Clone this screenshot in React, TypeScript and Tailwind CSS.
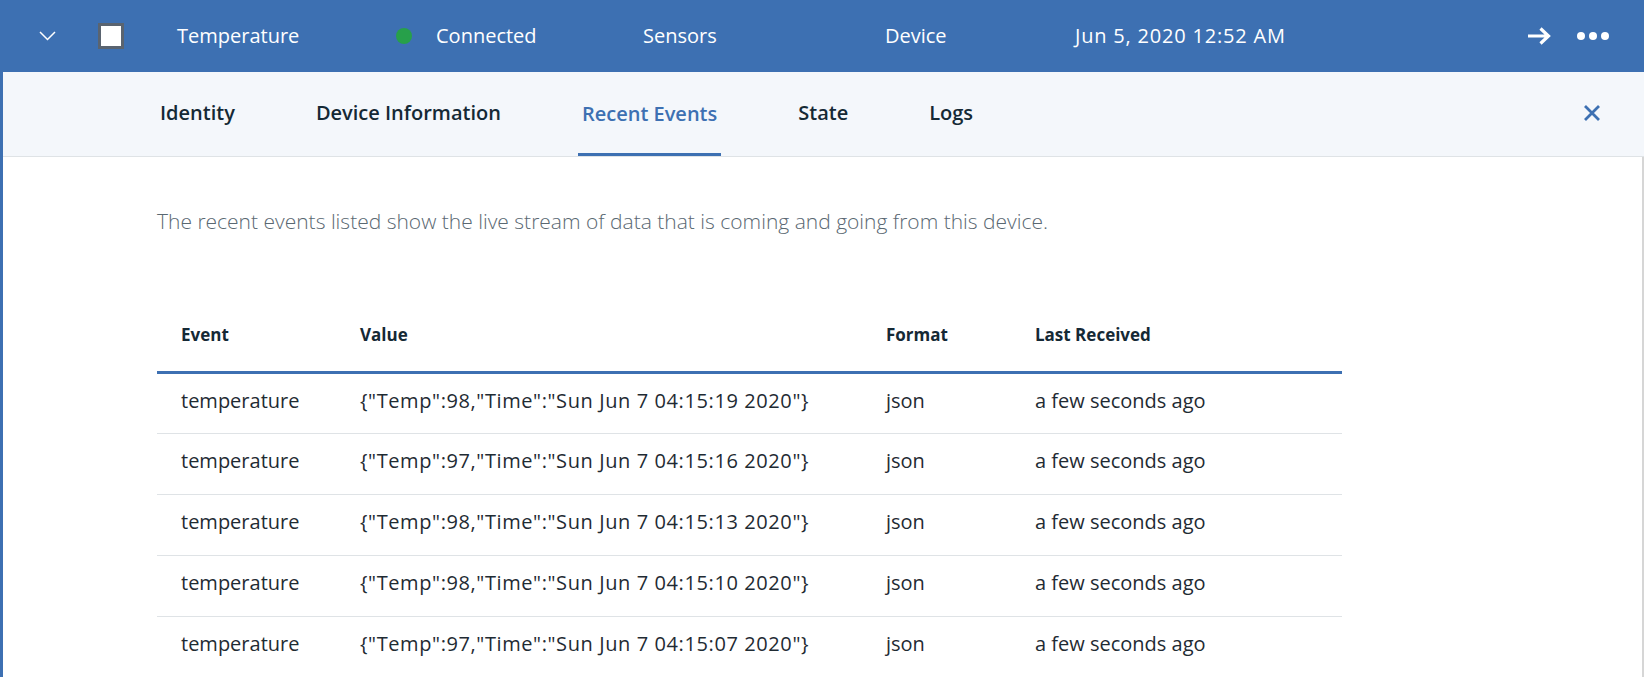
import React from "react";

const rows = [
  { event: "temperature", value: '{"Temp":98,"Time":"Sun Jun 7 04:15:19 2020"}', format: "json", last: "a few seconds ago" },
  { event: "temperature", value: '{"Temp":97,"Time":"Sun Jun 7 04:15:16 2020"}', format: "json", last: "a few seconds ago" },
  { event: "temperature", value: '{"Temp":98,"Time":"Sun Jun 7 04:15:13 2020"}', format: "json", last: "a few seconds ago" },
  { event: "temperature", value: '{"Temp":98,"Time":"Sun Jun 7 04:15:10 2020"}', format: "json", last: "a few seconds ago" },
  { event: "temperature", value: '{"Temp":97,"Time":"Sun Jun 7 04:15:07 2020"}', format: "json", last: "a few seconds ago" },
];

const tabs = ["Identity", "Device Information", "Recent Events", "State", "Logs"];

const font = "font-['Open_Sans',_'Liberation_Sans',_sans-serif]";

export default function App() {
  return (
    <div className={`w-[1644px] bg-white ${font}`}>
      {/* device row */}
      <div className="flex h-[72px] items-center bg-[#3d70b2] text-[20px] text-white">
        <div className="flex w-[98px] justify-start pl-[39px]">
          <svg width="17" height="10" viewBox="0 0 17 10" fill="none">
            <path d="M1 1L8.5 8.5L16 1" stroke="white" strokeWidth="1.5" />
          </svg>
        </div>
        <div className="w-[79px]">
          <div className="h-[26px] w-[26px] border-[3px] border-[#5a6470] bg-white" />
        </div>
        <div className="w-[219px]">Temperature</div>
        <div className="flex w-[247px] items-center">
          <span className="h-4 w-4 rounded-full bg-[#27a04a]" />
          <span className="ml-6">Connected</span>
        </div>
        <div className="w-[242px]">Sensors</div>
        <div className="w-[190px]">Device</div>
        <div className="flex-1 tracking-[0.8px]">Jun 5, 2020 12:52 AM</div>
        <div className="flex items-center gap-[26px] pr-[35px]">
          <svg width="24" height="18" viewBox="0 0 24 18" fill="none">
            <path d="M1 9H21M13.5 1.5L21.5 9L13.5 16.5" stroke="white" strokeWidth="3.2" />
          </svg>
          <svg width="32" height="8" viewBox="0 0 32 8" fill="white">
            <circle cx="4" cy="4" r="4" />
            <circle cx="16" cy="4" r="4" />
            <circle cx="28" cy="4" r="4" />
          </svg>
        </div>
      </div>

      <div className="border-l-[3px] border-[#3d70b2]">
        {/* tabs */}
        <div className="flex h-[85px] items-stretch border-b border-[#dfe3e6] bg-[#f4f7fb] pl-[153px] pr-[43px]">
          <div className="flex gap-[73px]">
            {tabs.map((t) => (
              <div
                key={t}
                className={`flex items-center px-1 text-[20px] font-semibold ${
                  t === "Recent Events"
                    ? "border-b-[3px] border-[#3d70b2] pt-[3px] text-[#3d70b2]"
                    : "pb-[3px] text-[#152935]"
                }`}
              >
                {t}
              </div>
            ))}
          </div>
          <div className="ml-auto flex items-center pb-[2px]">
            <svg width="18" height="18" viewBox="0 0 18 18" fill="none">
              <path d="M2 2L16 16M16 2L2 16" stroke="#3d70b2" strokeWidth="2.8" />
            </svg>
          </div>
        </div>

        {/* content */}
        <div className="border-r-2 border-[#d6d6d6] pl-[154px] pt-[50px]">
          <p className="text-[21px] font-light leading-[28px] text-[#5a6872]">
            The recent events listed show the live stream of data that is coming and going from this device.
          </p>

          <table className="mt-[64px] w-[1185px] table-fixed border-collapse text-left">
            <colgroup>
              <col className="w-[179px]" />
              <col className="w-[526px]" />
              <col className="w-[149px]" />
              <col className="w-[331px]" />
            </colgroup>
            <thead>
              <tr className="h-[73px] border-b-[3px] border-[#3d70b2]">
                {["Event", "Value", "Format", "Last Received"].map((h) => (
                  <th key={h} className="px-6 text-[17px] font-bold text-[#152935]">
                    {h}
                  </th>
                ))}
              </tr>
            </thead>
            <tbody>
              {rows.map((r, i) => (
                <tr key={i} className="h-[61px] border-b border-[#dfe3e6] text-[20px] text-[#1f2b33]">
                  <td className="px-6 pb-[5px]">{r.event}</td>
                  <td className="whitespace-nowrap px-6 pb-[5px] tracking-[0.6px]">{r.value}</td>
                  <td className="px-6 pb-[5px]">{r.format}</td>
                  <td className="px-6 pb-[5px]">{r.last}</td>
                </tr>
              ))}
            </tbody>
          </table>
        </div>
      </div>
    </div>
  );
}
